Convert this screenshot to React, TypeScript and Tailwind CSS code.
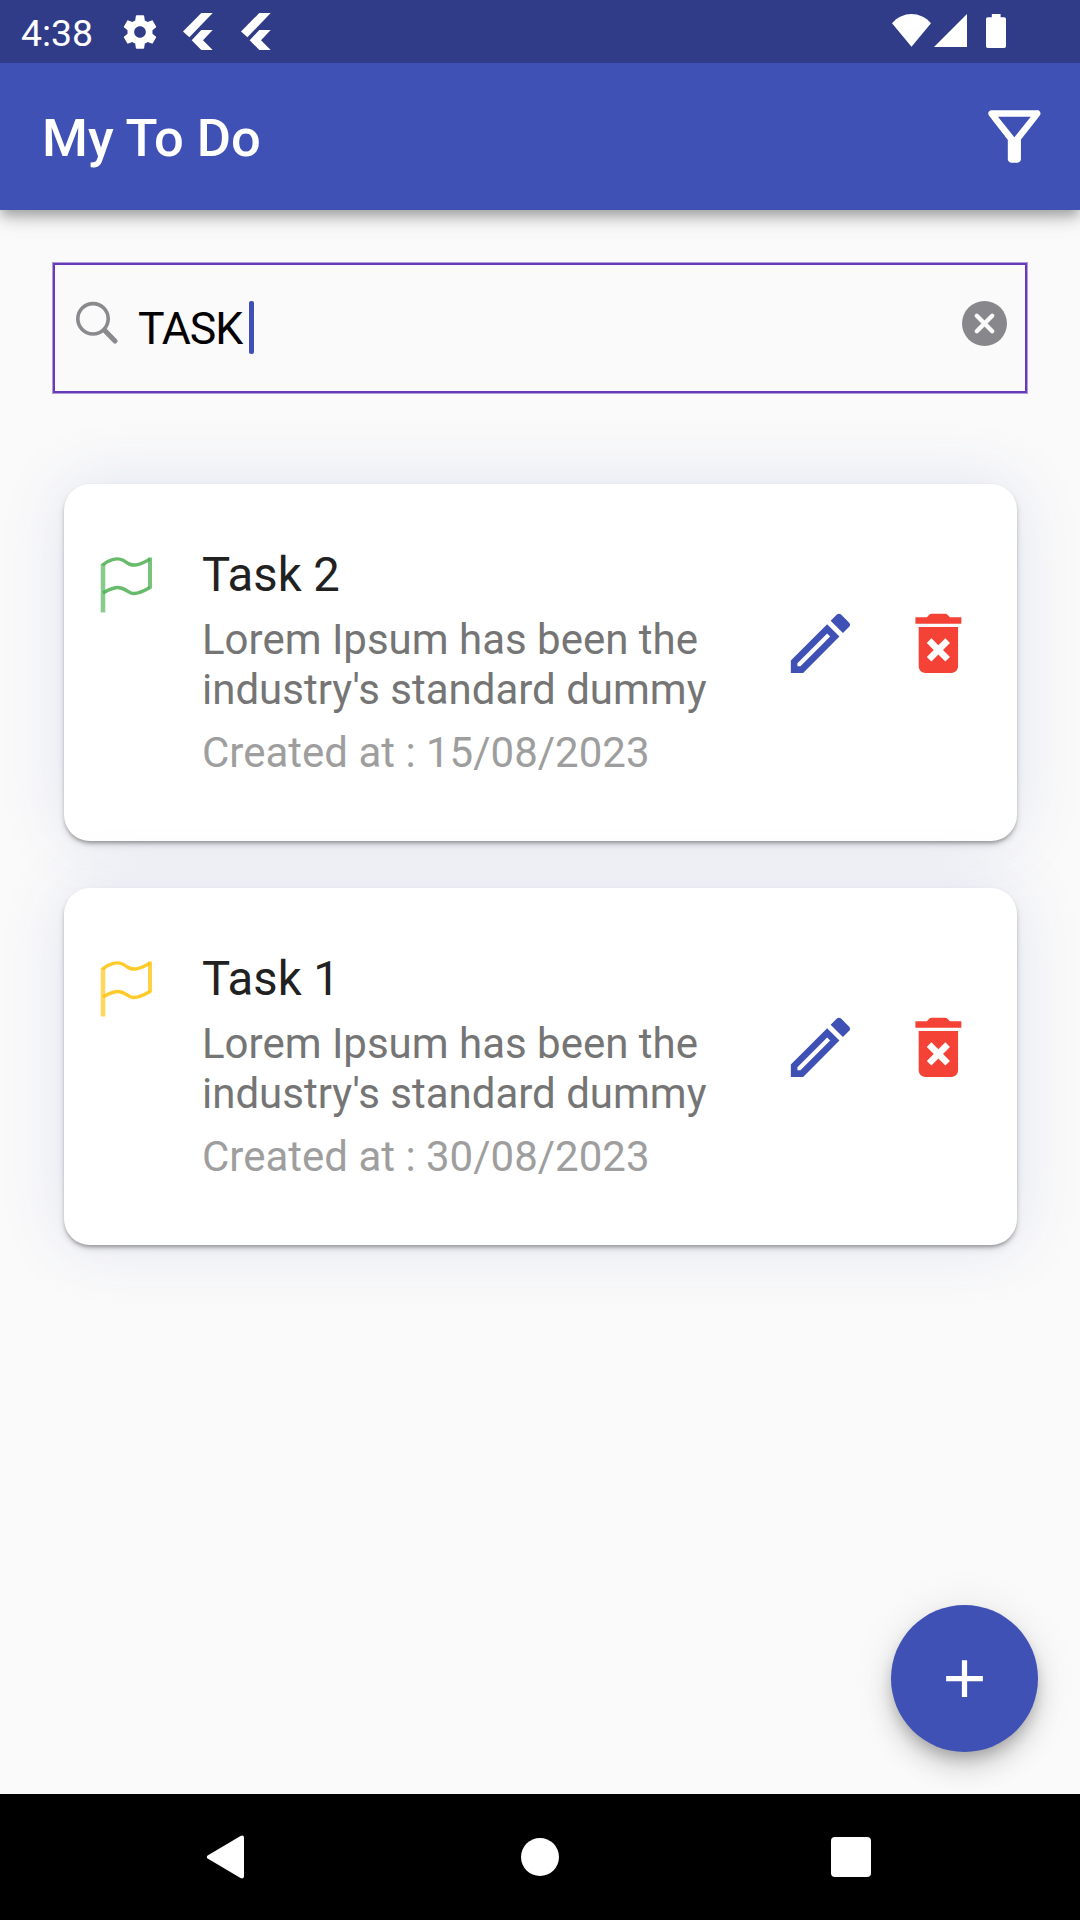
import React from "react";

type Task = { title: string; created: string; tone: string };

const tasks: Task[] = [
  { title: "Task 2", created: "15/08/2023", tone: "text-[#4caf50]" },
  { title: "Task 1", created: "30/08/2023", tone: "text-[#ffc107]" },
];

function FlutterMark() {
  return (
    <svg className="h-[37px] w-[30px]" viewBox="0 0 30 37" fill="#fff">
      <path d="M18.3 0H29.7L6.4 24.3L0 18.6Z" />
      <path d="M18.3 17H29.7L20 27.2L29.7 37H18.3L8.7 27.2Z" />
    </svg>
  );
}

function StatusBar() {
  return (
    <header className="relative z-10 flex h-[63px] items-start bg-[#303c87] text-white">
      <span className="ml-[21px] mt-[10px] w-[99px] text-[37.4px] leading-[46px]">4:38</span>
      <svg className="mt-[12px] h-[40px] w-[40px]" viewBox="0 0 24 24" fill="currentColor">
        <path d="M19.43 12.98c.04-.32.07-.64.07-.98s-.03-.66-.07-.98l2.11-1.65c.19-.15.24-.42.12-.64l-2-3.46c-.12-.22-.39-.3-.61-.22l-2.49 1c-.52-.4-1.08-.73-1.69-.98l-.38-2.65C14.46 2.18 14.25 2 14 2h-4c-.25 0-.46.18-.49.42l-.38 2.65c-.61.25-1.17.59-1.69.98l-2.49-1c-.23-.09-.49 0-.61.22l-2 3.46c-.13.22-.07.49.12.64l2.11 1.65c-.04.32-.07.65-.07.98s.03.66.07.98l-2.11 1.65c-.19.15-.24.42-.12.64l2 3.46c.12.22.39.3.61.22l2.49-1c.52.4 1.08.73 1.69.98l.38 2.65c.03.24.24.42.49.42h4c.25 0 .46-.18.49-.42l.38-2.65c.61-.25 1.17-.59 1.69-.98l2.49 1c.23.09.49 0 .61-.22l2-3.46c.12-.22.07-.49-.12-.64l-2.11-1.65zM12 15.5c-1.93 0-3.5-1.57-3.5-3.5s1.57-3.5 3.5-3.5 3.5 1.57 3.5 3.5-1.57 3.5-3.5 3.5z" />
      </svg>
      <div className="ml-[23px] mt-[13px] flex gap-[28px]">
        <FlutterMark />
        <FlutterMark />
      </div>
      <svg className="ml-auto mr-[74px] mt-[14px] h-[34px] w-[114px]" viewBox="0 0 114 34" fill="#fff">
        <path d="M0 9.2C5 3.4 12 0 19.5 0S34 3.4 39 9.2L19.5 32.7Z" />
        <path d="M75 0V33H42Z" />
        <path d="M99.8 0H108.6V3.3H112.2Q114 3.3 114 5.1V32.2Q114 34 112.2 34H95.8Q94 34 94 32.2V5.1Q94 3.3 95.8 3.3H99.8Z" />
      </svg>
    </header>
  );
}

function AppBar() {
  return (
    <div className="flex h-[147px] items-center justify-between bg-[#3f51b5] pl-[42px] pr-[26px] text-white shadow-[0_5px_10px_-2px_rgba(0,0,0,0.2),0_10px_13px_0_rgba(0,0,0,0.14),0_3px_26px_0_rgba(0,0,0,0.12)]">
      <h1 className="pt-[2px] text-[52.5px] font-medium leading-[62px]">My To Do</h1>
      <svg className="h-[78.75px] w-[78.75px]" viewBox="0 0 24 24" fill="currentColor">
        <path d="M7 6h10l-5.01 6.3L7 6zm-2.75-.39C6.27 8.2 10 13 10 13v6c0 .55.45 1 1 1h2c.55 0 1-.45 1-1v-6s3.72-4.8 5.74-7.39A.998.998 0 0 0 18.95 4H5.04c-.83 0-1.3.95-.79 1.61z" />
      </svg>
    </div>
  );
}

function SearchField() {
  return (
    <div className="mx-[53px] mt-[53px] flex h-[130px] items-start border-2 border-[#673ab7] pl-[20px] pr-[18px] shadow-[0_0_0_1px_rgba(103,58,183,0.5)]">
      <svg className="mt-[35px] h-[44px] w-[44px]" viewBox="0 0 44 44" fill="none" stroke="#8a8a8e" strokeLinecap="round">
        <circle cx="18" cy="18.8" r="15.2" strokeWidth="3.6" />
        <path d="M29.5 30.3L40 41" strokeWidth="5" />
      </svg>
      <div className="ml-[19px] mt-[36px] flex">
        <span className="pt-[1px] text-[44.6px] leading-[54px] tracking-[-1.08px] text-black">TASK</span>
        <span className="ml-[7px] h-[53px] w-[5.25px] rounded-[2px] bg-[#3f51b5]" />
      </div>
      <svg className="ml-auto mt-[36px] h-[45px] w-[45px]" viewBox="0 0 45 45">
        <circle cx="22.5" cy="22.5" r="22.5" fill="#88888c" />
        <path d="M14.8 14.8L30.2 30.2M30.2 14.8L14.8 30.2" stroke="#fafafa" strokeWidth="4.4" strokeLinecap="round" />
      </svg>
    </div>
  );
}

function Flag() {
  return (
    <svg className="h-[60px] w-[54px]" viewBox="0 0 54 60" fill="none" stroke="currentColor">
      <path d="M3 57.5V9" strokeWidth="4.6" opacity="0.65" />
      <path d="M2.5 10C8 5 17 2 23 5.2C28 8.5 30 10.5 35.5 10C41 9.5 45 6.5 50 4.2" strokeWidth="3.4" opacity="0.85" />
      <path d="M50 32.5C43 36.5 36 40 31 38C26 36 23 32 17 32.5C11 33 7 36 3 38" strokeWidth="3.4" opacity="0.85" />
      <path d="M50 2.5V33.5" strokeWidth="4" opacity="0.75" />
    </svg>
  );
}

function TaskCard({ task }: { task: Task }) {
  return (
    <article className="flex h-[357px] w-[953px] rounded-[26px] bg-white shadow-[0_3px_3px_-1px_rgba(0,0,0,0.18),0_3px_4px_0_rgba(0,0,0,0.12),0_4px_9px_-1px_rgba(0,0,0,0.12),0_0_66px_0_rgba(63,81,181,0.13)]">
      <div className={`ml-[36px] mt-[71px] w-[102px] ${task.tone}`}>
        <Flag />
      </div>
      <div className="mt-[63px] w-[579px]">
        <h2 className="text-[47.25px] leading-[56px] text-[#212121]">{task.title}</h2>
        <p className="mt-[12px] text-[42px] leading-[50px] text-[#757575]">
          Lorem Ipsum has been the
          <br />
          industry's standard dummy
        </p>
        <p className="mt-[13px] text-[42px] leading-[50px] text-[#9e9e9e]">Created at : {task.created}</p>
      </div>
      <div className="mt-[120px] flex gap-[39.4px]">
        <svg className="h-[78.75px] w-[78.75px]" viewBox="0 0 24 24" fill="#3f51b5">
          <path fillRule="evenodd" d="M3 17.25V21h3.75L17.81 9.94l-3.75-3.75L3 17.25zM14.06 9.02l.92.92L5.92 19H5v-.92l9.06-9.06zM20.71 7.04a.996.996 0 0 0 0-1.41l-2.34-2.34a1 1 0 0 0-1.41 0l-1.83 1.83 3.75 3.75 1.83-1.83z" />
        </svg>
        <svg className="h-[78.75px] w-[78.75px]" viewBox="0 0 24 24" fill="#f44336">
          <path d="M6 19c0 1.1.9 2 2 2h8c1.1 0 2-.9 2-2V7H6v12zm2.46-7.12l1.41-1.41L12 12.59l2.12-2.12 1.41 1.41L13.41 14l2.12 2.12-1.41 1.41L12 15.41l-2.12 2.12-1.41-1.41L10.59 14l-2.13-2.12zM15.5 4l-.71-.71c-.18-.18-.44-.29-.7-.29H9.91c-.26 0-.52.11-.7.29L8.5 4H5v2h14V4h-3.5z" />
        </svg>
      </div>
    </article>
  );
}

function NavBar() {
  return (
    <nav className="flex h-[126px] items-center bg-black pl-[206px]">
      <svg className="h-[44px] w-[39px]" viewBox="0 0 39 44" fill="#fff">
        <path d="M1.6 20.5L34.5 1Q38 -.5 38 3V41Q38 44.5 34.5 43L1.6 23.5Q0 22 1.6 20.5Z" />
      </svg>
      <span className="ml-[276px] h-[38px] w-[38px] rounded-full bg-white" />
      <span className="ml-[272px] h-[40px] w-[40px] rounded-[4px] bg-white" />
    </nav>
  );
}

export default function App() {
  return (
    <div className="flex h-[1920px] w-[1080px] flex-col overflow-hidden bg-[#fafafa] font-['Roboto',sans-serif]">
      <StatusBar />
      <AppBar />
      <main className="relative flex flex-1 flex-col">
        <SearchField />
        <section className="ml-[64px] mt-[91px] flex flex-col gap-[47px]">
          {tasks.map((task) => (
            <TaskCard key={task.title} task={task} />
          ))}
        </section>
        <button className="absolute bottom-[42px] right-[42px] flex h-[147px] w-[147px] items-center justify-center rounded-full bg-[#3f51b5] shadow-[0_8px_13px_-2px_rgba(0,0,0,0.2),0_16px_26px_0_rgba(0,0,0,0.14),0_3px_47px_0_rgba(0,0,0,0.08)]">
          <svg className="h-[63px] w-[63px]" viewBox="0 0 24 24" fill="#fff">
            <path d="M19 13h-6v6h-2v-6H5v-2h6V5h2v6h6v2z" />
          </svg>
        </button>
      </main>
      <NavBar />
    </div>
  );
}
